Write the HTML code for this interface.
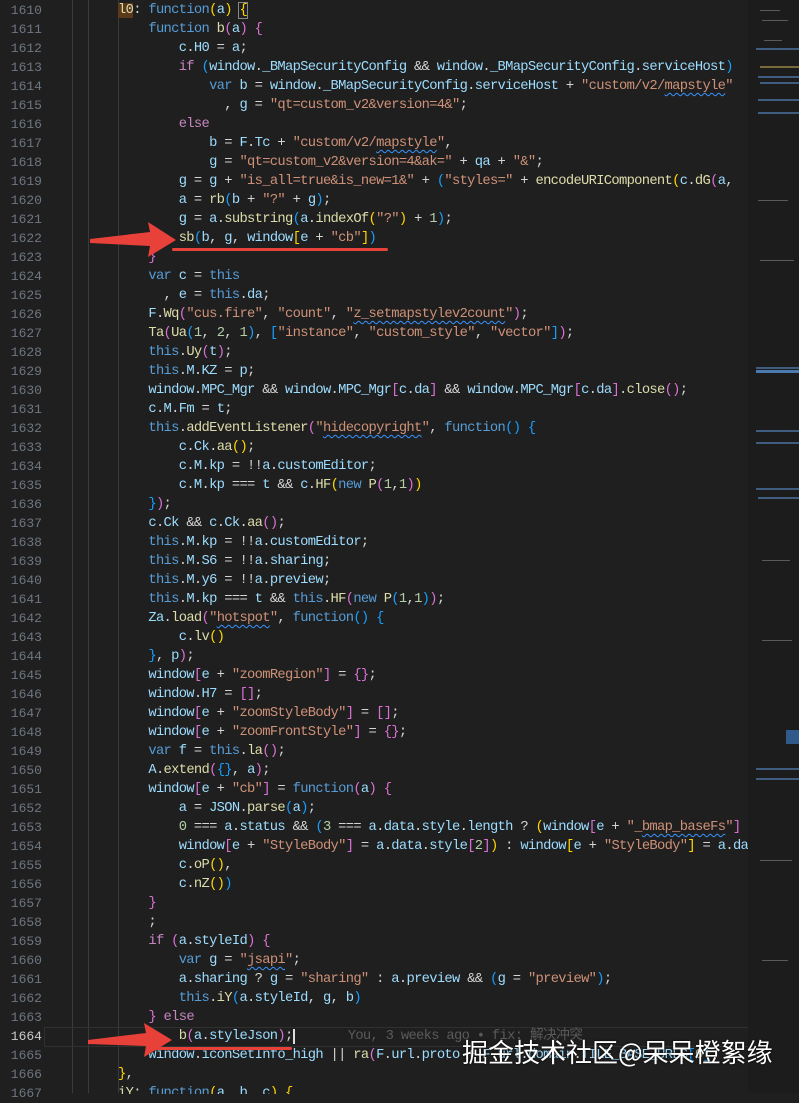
<!DOCTYPE html>
<html><head><meta charset="utf-8"><style>
html,body{margin:0;padding:0;background:#1f1f1f;width:799px;height:1093px;overflow:hidden;}
#g{position:absolute;left:0;top:1px;width:42px;font:13px/19px "Liberation Mono",monospace;color:#6e7681;text-align:right;}
#g div{height:19px}
#c{position:absolute;left:118px;top:1px;width:630px;height:1093px;overflow:hidden;font:13.8px/19px "Liberation Mono","Noto Sans CJK SC",monospace;letter-spacing:-0.69px;color:#d4d4d4;}
#c div{height:19px;white-space:pre}
.k{color:#569cd6}.v{color:#9cdcfe}.f{color:#dcdcaa}.s{color:#ce9178}.n{color:#b5cea8}.y{color:#ffd700}.p{color:#da70d6}.b{color:#179fff}.kc{color:#c586c0}
.sq{text-decoration:underline wavy #3794ff;text-decoration-thickness:1px;text-underline-offset:3px}
.gl{position:absolute;top:0;width:1px;height:1093px;background:#3a3a3a}
#mm{position:absolute;left:748px;top:0;width:51px;height:1093px;background:#1c1c1c;overflow:hidden}
#mm i{position:absolute;height:2px;background:#3f5d80}
#mm b{position:absolute;height:1px;background:#5a5a5a}
</style></head><body>
<div class="gl" style="left:72px"></div><div class="gl" style="left:88px"></div><div class="gl" style="left:118px"></div>
<div style="position:absolute;left:44px;top:1027px;width:704px;height:18px;border:1px solid #303030"></div>
<div id="g"><div>1610</div><div>1611</div><div>1612</div><div>1613</div><div>1614</div><div>1615</div><div>1616</div><div>1617</div><div>1618</div><div>1619</div><div>1620</div><div>1621</div><div>1622</div><div>1623</div><div>1624</div><div>1625</div><div>1626</div><div>1627</div><div>1628</div><div>1629</div><div>1630</div><div>1631</div><div>1632</div><div>1633</div><div>1634</div><div>1635</div><div>1636</div><div>1637</div><div>1638</div><div>1639</div><div>1640</div><div>1641</div><div>1642</div><div>1643</div><div>1644</div><div>1645</div><div>1646</div><div>1647</div><div>1648</div><div>1649</div><div>1650</div><div>1651</div><div>1652</div><div>1653</div><div>1654</div><div>1655</div><div>1656</div><div>1657</div><div>1658</div><div>1659</div><div>1660</div><div>1661</div><div>1662</div><div>1663</div><div style="color:#cccccc">1664</div><div>1665</div><div>1666</div><div>1667</div></div>
<div id="c">
<div><span style="background:#5a3a1a;color:#dcdcaa">l0</span>: <span class="k">function</span><span class="y">(</span><span class="v">a</span><span class="y">)</span> <span class="y" style="outline:1px solid #888">{</span></div>
<div>    <span class="k">function</span> <span class="f">b</span><span class="p">(</span><span class="v">a</span><span class="p">)</span> <span class="p">{</span></div>
<div>        <span class="v">c</span>.<span class="v">H0</span> = <span class="v">a</span>;</div>
<div>        <span class="kc">if</span> <span class="b">(</span><span class="v">window</span>.<span class="v">_BMapSecurityConfig</span> &amp;&amp; <span class="v">window</span>.<span class="v">_BMapSecurityConfig</span>.<span class="v">serviceHost</span><span class="b">)</span></div>
<div>            <span class="k">var</span> <span class="v">b</span> = <span class="v">window</span>.<span class="v">_BMapSecurityConfig</span>.<span class="v">serviceHost</span> + <span class="s">"custom/v2/<span class="sq">mapstyle</span>"</span></div>
<div>              , <span class="v">g</span> = <span class="s">"qt=custom_v2&amp;version=4&amp;"</span>;</div>
<div>        <span class="kc">else</span></div>
<div>            <span class="v">b</span> = <span class="v">F</span>.<span class="v">Tc</span> + <span class="s">"custom/v2/<span class="sq">mapstyle</span>"</span>,</div>
<div>            <span class="v">g</span> = <span class="s">"qt=custom_v2&amp;version=4&amp;ak="</span> + <span class="v">qa</span> + <span class="s">"&amp;"</span>;</div>
<div>        <span class="v">g</span> = <span class="v">g</span> + <span class="s">"is_all=true&amp;is_new=1&amp;"</span> + <span class="b">(</span><span class="s">"styles="</span> + <span class="f">encodeURIComponent</span><span class="y">(</span><span class="v">c</span>.<span class="f">dG</span><span class="p">(</span><span class="v">a</span>,</div>
<div>        <span class="v">a</span> = <span class="f">rb</span><span class="b">(</span><span class="v">b</span> + <span class="s">"?"</span> + <span class="v">g</span><span class="b">)</span>;</div>
<div>        <span class="v">g</span> = <span class="v">a</span>.<span class="f">substring</span><span class="b">(</span><span class="v">a</span>.<span class="f">indexOf</span><span class="y">(</span><span class="s">"?"</span><span class="y">)</span> + <span class="n">1</span><span class="b">)</span>;</div>
<div>        <span class="f">sb</span><span class="b">(</span><span class="v">b</span>, <span class="v">g</span>, <span class="v">window</span><span class="y">[</span><span class="v">e</span> + <span class="s">"cb"</span><span class="y">]</span><span class="b">)</span></div>
<div>    <span class="p">}</span></div>
<div>    <span class="k">var</span> <span class="v">c</span> = <span class="k">this</span></div>
<div>      , <span class="v">e</span> = <span class="k">this</span>.<span class="v">da</span>;</div>
<div>    <span class="v">F</span>.<span class="f">Wq</span><span class="p">(</span><span class="s">"cus.fire"</span>, <span class="s">"count"</span>, <span class="s">"<span class="sq">z_setmapstylev2count</span>"</span><span class="p">)</span>;</div>
<div>    <span class="f">Ta</span><span class="p">(</span><span class="f">Ua</span><span class="b">(</span><span class="n">1</span>, <span class="n">2</span>, <span class="n">1</span><span class="b">)</span>, <span class="b">[</span><span class="s">"instance"</span>, <span class="s">"custom_style"</span>, <span class="s">"vector"</span><span class="b">]</span><span class="p">)</span>;</div>
<div>    <span class="k">this</span>.<span class="f">Uy</span><span class="p">(</span><span class="v">t</span><span class="p">)</span>;</div>
<div>    <span class="k">this</span>.<span class="v">M</span>.<span class="v">KZ</span> = <span class="v">p</span>;</div>
<div>    <span class="v">window</span>.<span class="v">MPC_Mgr</span> &amp;&amp; <span class="v">window</span>.<span class="v">MPC_Mgr</span><span class="p">[</span><span class="v">c</span>.<span class="v">da</span><span class="p">]</span> &amp;&amp; <span class="v">window</span>.<span class="v">MPC_Mgr</span><span class="p">[</span><span class="v">c</span>.<span class="v">da</span><span class="p">]</span>.<span class="f">close</span><span class="p">()</span>;</div>
<div>    <span class="v">c</span>.<span class="v">M</span>.<span class="v">Fm</span> = <span class="v">t</span>;</div>
<div>    <span class="k">this</span>.<span class="f">addEventListener</span><span class="p">(</span><span class="s">"<span class="sq">hidecopyright</span>"</span>, <span class="k">function</span><span class="b">()</span> <span class="b">{</span></div>
<div>        <span class="v">c</span>.<span class="v">Ck</span>.<span class="f">aa</span><span class="y">()</span>;</div>
<div>        <span class="v">c</span>.<span class="v">M</span>.<span class="v">kp</span> = !!<span class="v">a</span>.<span class="v">customEditor</span>;</div>
<div>        <span class="v">c</span>.<span class="v">M</span>.<span class="v">kp</span> === <span class="v">t</span> &amp;&amp; <span class="v">c</span>.<span class="f">HF</span><span class="y">(</span><span class="k">new</span> <span class="f">P</span><span class="p">(</span><span class="n">1</span>,<span class="n">1</span><span class="p">)</span><span class="y">)</span></div>
<div>    <span class="b">}</span><span class="p">)</span>;</div>
<div>    <span class="v">c</span>.<span class="v">Ck</span> &amp;&amp; <span class="v">c</span>.<span class="v">Ck</span>.<span class="f">aa</span><span class="p">()</span>;</div>
<div>    <span class="k">this</span>.<span class="v">M</span>.<span class="v">kp</span> = !!<span class="v">a</span>.<span class="v">customEditor</span>;</div>
<div>    <span class="k">this</span>.<span class="v">M</span>.<span class="v">S6</span> = !!<span class="v">a</span>.<span class="v">sharing</span>;</div>
<div>    <span class="k">this</span>.<span class="v">M</span>.<span class="v">y6</span> = !!<span class="v">a</span>.<span class="v">preview</span>;</div>
<div>    <span class="k">this</span>.<span class="v">M</span>.<span class="v">kp</span> === <span class="v">t</span> &amp;&amp; <span class="k">this</span>.<span class="f">HF</span><span class="p">(</span><span class="k">new</span> <span class="f">P</span><span class="b">(</span><span class="n">1</span>,<span class="n">1</span><span class="b">)</span><span class="p">)</span>;</div>
<div>    <span class="v">Za</span>.<span class="f">load</span><span class="p">(</span><span class="s">"<span class="sq">hotspot</span>"</span>, <span class="k">function</span><span class="b">()</span> <span class="b">{</span></div>
<div>        <span class="v">c</span>.<span class="f">lv</span><span class="y">()</span></div>
<div>    <span class="b">}</span>, <span class="v">p</span><span class="p">)</span>;</div>
<div>    <span class="v">window</span><span class="p">[</span><span class="v">e</span> + <span class="s">"zoomRegion"</span><span class="p">]</span> = <span class="p">{}</span>;</div>
<div>    <span class="v">window</span>.<span class="v">H7</span> = <span class="p">[]</span>;</div>
<div>    <span class="v">window</span><span class="p">[</span><span class="v">e</span> + <span class="s">"zoomStyleBody"</span><span class="p">]</span> = <span class="p">[]</span>;</div>
<div>    <span class="v">window</span><span class="p">[</span><span class="v">e</span> + <span class="s">"zoomFrontStyle"</span><span class="p">]</span> = <span class="p">{}</span>;</div>
<div>    <span class="k">var</span> <span class="v">f</span> = <span class="k">this</span>.<span class="f">la</span><span class="p">()</span>;</div>
<div>    <span class="v">A</span>.<span class="f">extend</span><span class="p">(</span><span class="b">{}</span>, <span class="v">a</span><span class="p">)</span>;</div>
<div>    <span class="v">window</span><span class="p">[</span><span class="v">e</span> + <span class="s">"cb"</span><span class="p">]</span> = <span class="k">function</span><span class="p">(</span><span class="v">a</span><span class="p">)</span> <span class="p">{</span></div>
<div>        <span class="v">a</span> = <span class="v">JSON</span>.<span class="f">parse</span><span class="b">(</span><span class="v">a</span><span class="b">)</span>;</div>
<div>        <span class="n">0</span> === <span class="v">a</span>.<span class="v">status</span> &amp;&amp; <span class="b">(</span><span class="n">3</span> === <span class="v">a</span>.<span class="v">data</span>.<span class="v">style</span>.<span class="v">length</span> ? <span class="y">(</span><span class="v">window</span><span class="p">[</span><span class="v">e</span> + <span class="s">"_<span class="sq">bmap_baseFs</span>"</span><span class="p">]</span></div>
<div>        <span class="v">window</span><span class="p">[</span><span class="v">e</span> + <span class="s">"StyleBody"</span><span class="p">]</span> = <span class="v">a</span>.<span class="v">data</span>.<span class="v">style</span><span class="p">[</span><span class="n">2</span><span class="p">]</span><span class="y">)</span> : <span class="v">window</span><span class="y">[</span><span class="v">e</span> + <span class="s">"StyleBody"</span><span class="y">]</span> = <span class="v">a</span>.<span class="v">data</span></div>
<div>        <span class="v">c</span>.<span class="f">oP</span><span class="y">()</span>,</div>
<div>        <span class="v">c</span>.<span class="f">nZ</span><span class="y">()</span><span class="b">)</span></div>
<div>    <span class="p">}</span></div>
<div>    ;</div>
<div>    <span class="kc">if</span> <span class="p">(</span><span class="v">a</span>.<span class="v">styleId</span><span class="p">)</span> <span class="p">{</span></div>
<div>        <span class="k">var</span> <span class="v">g</span> = <span class="s">"<span class="sq">jsapi</span>"</span>;</div>
<div>        <span class="v">a</span>.<span class="v">sharing</span> ? <span class="v">g</span> = <span class="s">"sharing"</span> : <span class="v">a</span>.<span class="v">preview</span> &amp;&amp; <span class="b">(</span><span class="v">g</span> = <span class="s">"preview"</span><span class="b">)</span>;</div>
<div>        <span class="k">this</span>.<span class="f">iY</span><span class="b">(</span><span class="v">a</span>.<span class="v">styleId</span>, <span class="v">g</span>, <span class="v">b</span><span class="b">)</span></div>
<div>    <span class="p">}</span> <span class="kc">else</span></div>
<div>        <span class="f">b</span><span class="p">(</span><span class="v">a</span>.<span class="v">styleJson</span><span class="p">)</span>;<span style="border-left:2px solid #ddd"></span>       <span style="color:#5a5a5a">You, 3 weeks ago • fix: 解决冲突</span></div>
<div>    <span class="v">window</span>.<span class="v">iconSetInfo_high</span> || <span class="f">ra</span><span class="p">(</span><span class="v">F</span>.<span class="v">url</span>.<span class="v">proto</span> + <span class="v">F</span>.<span class="v">url</span>.<span class="v">domain</span>.<span class="v">TILE_BASE_URLS</span><span class="b">[</span><span class="n">0</span><span class="b">]</span></div>
<div><span class="y">}</span>,</div>
<div><span class="f">iY</span>: <span class="k">function</span><span class="y">(</span><span class="v">a</span>, <span class="v">b</span>, <span class="v">c</span><span class="y">)</span> <span class="y">{</span></div>
</div>
<div id="mm">
<b style="left:12px;top:10px;width:20px"></b><b style="left:14px;top:20px;width:26px"></b><b style="left:16px;top:40px;width:18px"></b>
<i style="left:8px;top:48px;width:43px"></i><i style="left:12px;top:66px;width:39px;background:#7a6a3a"></i><i style="left:10px;top:76px;width:41px"></i><i style="left:12px;top:82px;width:39px"></i><i style="left:10px;top:99px;width:41px"></i><i style="left:10px;top:112px;width:41px"></i>
<i style="left:8px;top:367px;width:43px"></i><i style="left:8px;top:370px;width:43px;height:3px;background:#4a7ab0"></i><i style="left:8px;top:430px;width:43px"></i><i style="left:8px;top:442px;width:43px"></i><i style="left:8px;top:488px;width:43px"></i><i style="left:10px;top:497px;width:41px"></i>
<i style="left:38px;top:730px;width:13px;height:14px;background:#2f5a8a"></i><i style="left:8px;top:768px;width:43px"></i><i style="left:8px;top:778px;width:43px"></i>
<b style="left:10px;top:200px;width:30px"></b><b style="left:12px;top:260px;width:34px"></b><b style="left:14px;top:560px;width:28px"></b><b style="left:14px;top:640px;width:30px"></b><b style="left:12px;top:860px;width:32px"></b><b style="left:14px;top:960px;width:26px"></b>
</div>
<svg style="position:absolute;left:0;top:0" width="799" height="1093">
<polygon points="90,239 150,232 148,222 176,240 148,257 150,246 90,243" fill="#e8413a"/>
<rect x="172" y="248" width="216" height="3" rx="1.5" fill="#e8413a"/>
<polygon points="88,1040 146,1033 144,1023 172,1040 144,1057 146,1046 88,1044" fill="#e8413a"/>
<rect x="152" y="1047" width="140" height="3" rx="1.5" fill="#e8413a"/>
</svg>
<div style="position:absolute;left:462px;top:1036px;font:26px/32px 'Noto Sans CJK SC',sans-serif;color:#fff;white-space:nowrap;text-shadow:0 0 2px #000">掘金技术社区@呆呆橙絮缘</div>
</body></html>
